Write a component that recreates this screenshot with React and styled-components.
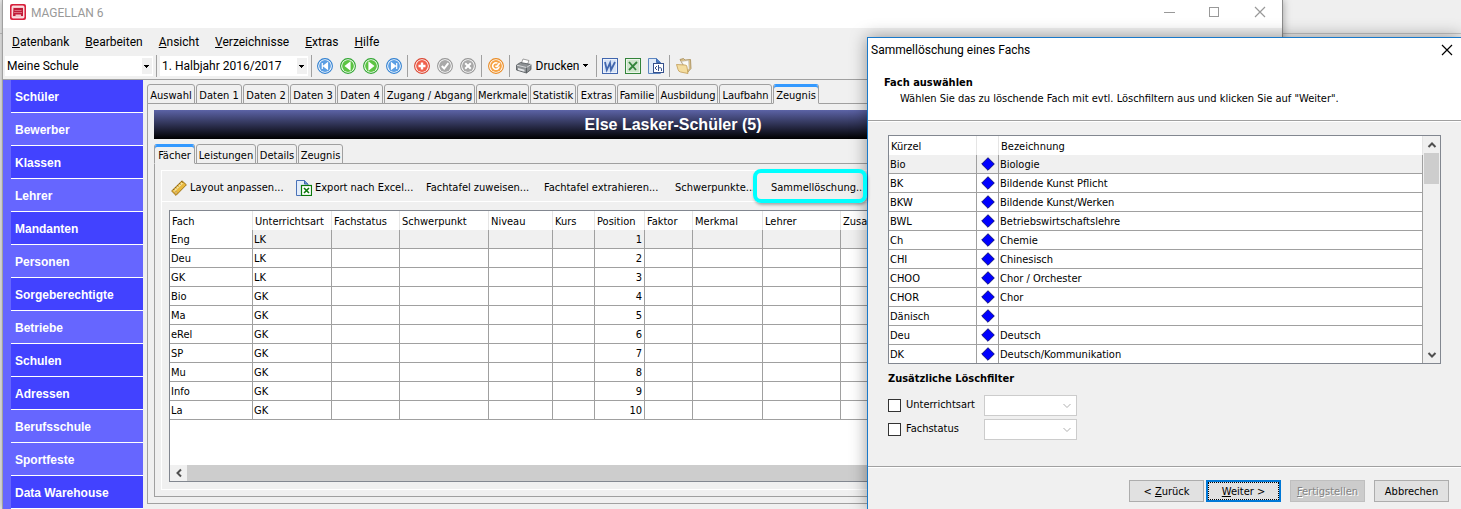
import React from "react";
import styled, { createGlobalStyle, css } from "styled-components";

const ui = `"DejaVu Sans Condensed", "DejaVu Sans", sans-serif`;
const shell = `Roboto, "Open Sans", sans-serif`;
const arial = `"Liberation Sans", Arial, sans-serif`;

const GlobalStyle = createGlobalStyle`
  *, *::before, *::after { box-sizing: border-box; }
  body { margin: 0; background: #efefef; color: #000; font: 11px/16px ${ui}; overflow: hidden; }
  button, select, input { font: inherit; color: inherit; margin: 0; }
`;

const Desktop = styled.div`
  position: relative;
  display: flex;
  min-height: 100vh;
  padding-left: 2px;
  background: linear-gradient(#efefef, #efefef 33px, #c6c6c6 33px, #c6c6c6 34px, #efefef 34px);
`;

const AppWindow = styled.section`
  flex: 1;
  min-width: 0;
  margin-right: 178px;
  display: flex;
  flex-direction: column;
  background: #f0f0f0;
  border-left: 1px solid #a0a0a0;
  border-right: 1px solid #8c8c8c;
  box-shadow: 0 0 8px rgba(0, 0, 0, 0.35);
`;

const TitleBar = styled.header`
  display: flex;
  align-items: center;
  height: 28px;
  padding: 0 0 4px 7px;
  background: #fff;
  color: #999;
  font: 12px/16px ${shell};
`;

const Title = styled.span`
  flex: 1;
  padding: 2px 0 0 5px;
`;

const CaptionButton = styled.button`
  display: grid;
  place-items: center;
  width: 45px;
  height: 24px;
  padding: 0;
  border: 0;
  background: none;
`;

const MenuBar = styled.nav`
  display: flex;
  align-items: center;
  gap: 16px;
  height: 26px;
  padding: 1px 0 0 9px;
  font: 12px/16px ${shell};
`;

const MenuItem = styled.button`
  padding: 0;
  border: 0;
  background: none;
`;

const ToolBar = styled.div`
  display: flex;
  align-items: center;
  height: 26px;
  padding: 0 0 2px 2px;
  border-bottom: 1px solid #a0a0a0;
  font: 12px/16px ${shell};
`;

const Separator = styled.span`
  width: 1px;
  height: 22px;
  margin: 0 ${(p) => p.$after ?? 6}px 0 ${(p) => p.$before ?? 6}px;
  background: #a0a0a0;
`;

const Combo = styled.span`
  display: grid;
  align-items: center;
  width: 148px;
  height: 20px;
  background: #fff;
  > * { grid-area: 1 / 1; }
  > svg { justify-self: end; margin-right: 1px; pointer-events: none; }
`;

const ComboSelect = styled.select`
  appearance: none;
  width: 100%;
  height: 20px;
  padding: 0 20px 0 2px;
  border: 0;
  background: none;
`;

const IconButton = styled.button`
  display: flex;
  align-items: center;
  justify-content: center;
  gap: 4px;
  min-width: 23px;
  height: 20px;
  padding: 0;
  border: 0;
  background: none;
`;

const PrintButton = styled(IconButton)`
  width: 74px;
`;

const Body = styled.div`
  flex: 1;
  display: flex;
  min-height: 0;
`;

const SideBar = styled.nav`
  display: flex;
  flex-direction: column;
  width: 140px;
  padding-left: 8px;
  background: #6666ff;
`;

const SideLink = styled.a`
  height: 33px;
  padding: 1px 0 0 4px;
  border-bottom: 1px solid #fff;
  background: ${(p) => (p.$dark ? "#4242ff" : "#6666ff")};
  color: #fff;
  font: bold 12px/33px ${arial};
  text-decoration: none;
`;

const Workspace = styled.main`
  flex: 1;
  min-width: 0;
  display: flex;
  flex-direction: column;
  padding: 4px 4px 5px;
`;

const Tabs = styled.div`
  display: flex;
  gap: 1px;
  position: relative;
  margin-bottom: -1px;
`;

const Tab = styled.button`
  width: ${(p) => p.$w}px;
  height: 20px;
  padding: 4px 0 0;
  border: 1px solid #a0a0a0;
  border-radius: 3px 3px 0 0;
  background: #f0f0f0;
  line-height: 14px;
  white-space: nowrap;
  ${(p) =>
    p.$active &&
    css`
      border-bottom-color: #f0f0f0;
      box-shadow: inset 0 2px #3399ff;
      border-top-color: #3399ff;
    `}
`;

const TabPage = styled.div`
  flex: 1;
  min-width: 0;
  display: flex;
  flex-direction: column;
  padding: 6px;
  border: 1px solid #a0a0a0;
`;

const NameBanner = styled.h1`
  height: 29px;
  margin: 0 0 5px;
  padding-right: 79px;
  background: linear-gradient(#5c63a6, #000);
  color: #fff;
  font: bold 16px/29px ${arial};
  text-align: center;
`;

const Panel = styled.div`
  flex: 1;
  display: flex;
  flex-direction: column;
  border: 1px solid #fff;
`;

const ActionBar = styled.div`
  display: flex;
  align-items: center;
  height: 31px;
  padding: 3px 0 0 9px;
  border-bottom: 1px solid #fff;
`;

const Action = styled.button`
  position: relative;
  display: flex;
  align-items: center;
  gap: 3px;
  width: ${(p) => p.$w}px;
  height: 24px;
  padding: 0;
  border: 0;
  background: none;
  white-space: nowrap;
`;

const Highlight = styled.span`
  position: absolute;
  z-index: 3;
  inset: -7px -7px -3px -18px;
  border: 4px solid #00ffff;
  border-radius: 8px;
  box-shadow: 1px 2px 3px rgba(0, 0, 0, 0.3);
  pointer-events: none;
`;

const GridBox = styled.div`
  flex: 1;
  display: flex;
  flex-direction: column;
  justify-content: space-between;
  margin: 8px 7px 7px;
  border: 1px solid #828790;
  background: #fff;
`;

const DataTable = styled.table`
  width: 100%;
  table-layout: fixed;
  border-collapse: separate;
  border-spacing: 0;
`;

const HeadCell = styled.th`
  height: 19px;
  padding: 2px 0 0 2px;
  border-right: 1px solid #e5e5e5;
  font-weight: normal;
  line-height: 16px;
  text-align: left;
  white-space: nowrap;
  overflow: hidden;
`;

const Row = styled.tr`
  background: ${(p) => (p.$selected ? "#f0f0f0" : "#fff")};
`;

const Cell = styled.td`
  height: 19px;
  padding: 2px 2px 0 1px;
  border-right: 1px solid #a0a0a0;
  border-bottom: 1px solid #a0a0a0;
  background: ${(p) => (p.$plain ? "#fff" : "transparent")};
  line-height: 16px;
  text-align: ${(p) => p.$align || "left"};
  white-space: nowrap;
`;

const MarkCell = styled(Cell)`
  padding: 0;
  > svg { display: block; margin: 0 auto; }
`;

const HScroll = styled.div`
  display: flex;
  align-items: center;
  height: 16px;
  background: #f0f0f0;
`;

const HThumb = styled.span`
  flex: 1;
  height: 16px;
  margin-right: 17px;
  background: #cdcdcd;
`;

const ScrollButton = styled.button`
  display: grid;
  place-items: center;
  width: 17px;
  height: 17px;
  padding: 0;
  border: 0;
  background: none;
`;

const Dialog = styled.section`
  position: absolute;
  z-index: 2;
  top: 37px;
  right: 0;
  bottom: 0;
  width: 594px;
  display: flex;
  flex-direction: column;
  border: solid #1979ca;
  border-width: 1px 0 0 1px;
  background: #f0f0f0;
  box-shadow: 0 0 16px rgba(0, 0, 0, 0.4);
`;

const DialogHead = styled.header`
  height: 83px;
  background: #fff;
  border-bottom: 1px solid #a0a0a0;
`;

const DialogTitle = styled.div`
  display: flex;
  align-items: center;
  justify-content: space-between;
  height: 24px;
  padding-left: 3px;
  font: 12px/16px ${shell};
`;

const DialogClose = styled(CaptionButton)`
  width: 29px;
`;

const Heading = styled.h2`
  margin: 0;
  padding: ${(p) => p.$pad};
  font: bold 11px/16px ${ui};
`;

const Hint = styled.p`
  margin: 0;
  padding-left: 32px;
`;

const DialogBody = styled.div`
  flex: 1;
  padding: 13px 20px 0;
  border-top: 1px solid #fff;
`;

const PickList = styled.div`
  display: flex;
  height: 229px;
  overflow: hidden;
  border: 1px solid #828790;
  background: #fff;
`;

const VScroll = styled.div`
  display: flex;
  flex-direction: column;
  justify-content: space-between;
  width: 17px;
  background: #f0f0f0;
`;

const VThumb = styled.span`
  width: 15px;
  height: 31px;
  margin: 0 1px auto;
  background: #cdcdcd;
`;

const Filter = styled.div`
  display: flex;
  align-items: center;
  height: 24px;
`;

const CheckLabel = styled.label`
  display: flex;
  align-items: center;
  gap: 5px;
  width: 96px;
`;

const CheckBox = styled.input`
  appearance: none;
  width: 13px;
  height: 13px;
  border: 1px solid #333;
  background: #fff;
`;

const FilterCombo = styled(Combo)`
  width: 93px;
  height: 21px;
  border: 1px solid #ccc;
  > svg { margin-right: 4px; }
`;

const DialogFoot = styled.footer`
  display: flex;
  height: 43px;
  padding: 13px 12px 0;
  justify-content: flex-end;
  border-top: 1px solid #a0a0a0;
  box-shadow: inset 0 1px #fff;
`;

const PushButton = styled.button`
  width: 75px;
  height: 22px;
  margin-left: ${(p) => p.$gap}px;
  padding: 2px 0 0;
  border: 1px solid #adadad;
  background: #e1e1e1;
  line-height: 16px;
  ${(p) =>
    p.$default &&
    css`
      border: 2px solid #0078d7;
      outline: 1px dotted #000;
      outline-offset: -3px;
    `}
  &:disabled {
    border-color: #bfbfbf;
    background: #ccc;
    color: #838383;
    text-shadow: 1px 1px #fff;
  }
`;

const Caret = () => (
  <svg width="10" height="16" viewBox="0 0 10 16">
    <rect width="10" height="16" fill="#f0f0f0" />
    <path d="M2 7h5v1H6v1H5v1H4V9H3V8H2z" fill="#000" />
  </svg>
);

const Chevron = ({ dir = "down", color = "#505050", thick = 2 }) => {
  const d = {
    down: "M1.500 3L5 6.500L8.500 3",
    up: "M1.500 7L5 3.500L8.500 7",
    left: "M7 1.500L3.500 5L7 8.500",
  }[dir];
  return (
    <svg width="10" height="10" viewBox="0 0 10 10">
      <path d={d} fill="none" stroke={color} strokeWidth={thick} />
    </svg>
  );
};

const CloseGlyph = ({ color }) => (
  <svg width="12" height="12" viewBox="0 0 12 12">
    <path d="M1 1l10 10M11 1L1 11" stroke={color} strokeWidth="1.200" />
  </svg>
);

const Logo = () => (
  <svg width="16" height="16" viewBox="0 0 16 16">
    <rect width="16" height="16" rx="2" fill="#d8203c" />
    <rect x="2" y="2" width="12" height="12" rx="1" fill="#f6c9cd" stroke="#fff" strokeWidth=".8" />
    <path d="M3.500 4h9.500v8h-2v-1.500H5.500V12H3z" fill="#c01c38" />
    <path d="M4.500 6.500h7M4 8.500h8" stroke="#e8909c" strokeWidth=".7" />
  </svg>
);

const glyphs = {
  first: <path d="M5.300 5v6M10.500 5v6L6.500 8z" />,
  prev: <path d="M10 4.500v7L5.500 8z" />,
  next: <path d="M6 4.500v7L10.500 8z" />,
  last: <path d="M5.500 5v6L9.500 8zM10.700 5v6" />,
  add: <path d="M8 4.500v7M4.500 8h7" strokeWidth="2.400" />,
  ok: <path d="M4.800 8l2.400 2.500L11.300 5.200" fill="none" strokeWidth="2" />,
  cancel: <path d="M5.200 5.200l5.600 5.600M10.800 5.200l-5.600 5.600" strokeWidth="2" />,
  refresh: <path d="M11.200 8.500A3.300 3.300 0 1 1 9.500 5.100M7.300 8l1.700.5L11.600 5" fill="none" strokeWidth="1.600" />,
};

const palette = {
  blue: ["#2f7fd0", "#5c9fe4"],
  green: ["#2fa52f", "#5cc443"],
  red: ["#d9432f", "#f0604c"],
  gray: ["#969696", "#a9a9a9"],
  orange: ["#e98a22", "#f7a343"],
};

const Round = ({ tone, glyph }) => (
  <svg width="16" height="16" viewBox="0 0 16 16">
    <circle cx="8" cy="8" r="7.400" fill="#fff" stroke={palette[tone][0]} strokeWidth="1.100" />
    <circle cx="8" cy="8" r="5.900" fill={palette[tone][1]} />
    <g fill="#fff" stroke="#fff" strokeWidth="1.200">{glyphs[glyph]}</g>
  </svg>
);

const Printer = () => (
  <svg width="16" height="16" viewBox="0 0 16 16">
    <path d="M5 6l2-5 6 1.500-2 5z" fill="#fff" stroke="#888" strokeWidth=".8" />
    <path d="M0.500 7l4-2.500L15 6.500v5l-4.500 3.500L.5 12z" fill="#8d9194" stroke="#4f5458" strokeWidth=".8" />
    <path d="M.8 7.200L10.500 9.500 15 6.500" fill="none" stroke="#d8dadc" />
    <path d="M10.500 9.500V15" stroke="#4f5458" strokeWidth=".8" />
    <path d="M2 10l6.500 1.700v2L2 12z" fill="#e4e6e8" />
  </svg>
);

const OfficeTile = ({ tone, bg, children }) => (
  <svg width="16" height="16" viewBox="0 0 16 16">
    <rect x=".5" y=".5" width="15" height="15" fill={bg} stroke={tone} />
    <rect x="1.500" y="1.500" width="13" height="13" fill="none" stroke="#fff" strokeOpacity=".6" />
    <g fill="none" stroke={tone} strokeWidth="1.800">{children}</g>
  </svg>
);

const HtmlDoc = () => (
  <svg width="16" height="16" viewBox="0 0 16 16">
    <path d="M.5.500h8l4 4v11H.5z" fill="#dfeaf8" stroke="#5d86c0" />
    <path d="M8.500.5v4h4" fill="#4d7cc4" stroke="#3f6bb0" />
    <rect x="5.500" y="5.500" width="10" height="9" fill="#fff" stroke="#35508c" />
    <path d="M9 8l-2 2 2 2M10.500 7v6M10.500 10.500c.5-1.200 3-1.200 3 .3V13" fill="none" stroke="#35508c" />
  </svg>
);

const Folder = () => (
  <svg width="16" height="16" viewBox="0 0 16 16">
    <path d="M4 1.500l3.500-1 1.500 1.500 5.500-.5.500 9-3.500 4z" fill="#d9c08a" stroke="#a58a55" strokeWidth=".8" />
    <path d="M5.500 3.500l7-1 .5 8-2 2z" fill="#fbfbf8" stroke="#bbb" strokeWidth=".5" />
    <path d="M.5 6.500l8.500.5q2 0 2 2l1 6.500L4.500 14Q2.500 13.500 2 11.500z" fill="#f4dda0" stroke="#c09c55" strokeWidth=".8" />
  </svg>
);

const Ruler = () => (
  <svg width="16" height="16" viewBox="0 0 16 16">
    <path d="M.6 11L11 .8l4.400 4L5 15.400z" fill="#e9b93e" stroke="#96690f" strokeWidth=".9" />
    <path d="M3 11.300L11.400 3" stroke="#f9e6a0" strokeWidth="1.500" />
    <path d="M2.500 9.200l1 1M4.500 7.300l1 1M6.500 5.400l1 1M8.500 3.400l1 1M10.500 1.500l1 1" stroke="#5f4208" strokeWidth=".9" />
    <circle cx="5" cy="12.500" r=".9" fill="#fff7dc" stroke="#96690f" strokeWidth=".5" />
  </svg>
);

const ExcelDoc = () => (
  <svg width="16" height="16" viewBox="0 0 16 16">
    <path d="M.5.500h8l3.500 3.500v11.500H.5z" fill="#e3edfa" stroke="#4a72b8" />
    <path d="M8.500.5V4H12" fill="#6f96d4" stroke="#3f66ac" />
    <rect x="5.500" y="5.500" width="10" height="10" fill="#fff" stroke="#0b780b" strokeWidth="1.200" />
    <path d="M8 8l5 5M13 8l-5 5" stroke="#0b780b" strokeWidth="1.600" />
  </svg>
);

const Diamond = () => (
  <svg width="14" height="14" viewBox="0 0 14 14">
    <path d="M7 .7L13.300 7 7 13.300.7 7z" fill="#0000ff" stroke="#000060" strokeWidth=".8" />
  </svg>
);

const menus = ["Datenbank", "Bearbeiten", "Ansicht", "Verzeichnisse", "Extras", "Hilfe"];

const sections = [
  ["Schüler", true], ["Bewerber", false], ["Klassen", true], ["Lehrer", false],
  ["Mandanten", true], ["Personen", false], ["Sorgeberechtigte", true], ["Betriebe", false],
  ["Schulen", true], ["Adressen", true], ["Berufsschule", false], ["Sportfeste", false],
  ["Data Warehouse", true],
];

const mainTabs = [
  ["Auswahl", 48], ["Daten 1", 46], ["Daten 2", 46], ["Daten 3", 46], ["Daten 4", 46],
  ["Zugang / Abgang", 91], ["Merkmale", 53], ["Statistik", 46], ["Extras", 39],
  ["Familie", 40], ["Ausbildung", 60], ["Laufbahn", 53], ["Zeugnis", 46],
];

const subTabs = [["Fächer", 41], ["Leistungen", 60], ["Details", 40], ["Zeugnis", 45]];

const columns = [
  ["Fach", 83], ["Unterrichtsart", 79], ["Fachstatus", 68], ["Schwerpunkt", 89], ["Niveau", 64],
  ["Kurs", 42], ["Position", 50], ["Faktor", 48], ["Merkmal", 70], ["Lehrer", 78], ["Zusatz", null],
];

const subjects = [
  ["Eng", "LK"], ["Deu", "LK"], ["GK", "LK"], ["Bio", "GK"], ["Ma", "GK"],
  ["eRel", "GK"], ["SP", "GK"], ["Mu", "GK"], ["Info", "GK"], ["La", "GK"],
];

const catalog = [
  ["Bio", "Biologie"], ["BK", "Bildende Kunst Pflicht"], ["BKW", "Bildende Kunst/Werken"],
  ["BWL", "Betriebswirtschaftslehre"], ["Ch", "Chemie"], ["CHI", "Chinesisch"],
  ["CHOO", "Chor / Orchester"], ["CHOR", "Chor"], ["Dänisch", ""], ["Deu", "Deutsch"],
  ["DK", "Deutsch/Kommunikation"],
];

const TabStrip = ({ items, active }) => (
  <Tabs role="tablist">
    {items.map(([name, w], i) => (
      <Tab key={name} role="tab" $w={w} $active={i === active} aria-selected={i === active}>
        {name}
      </Tab>
    ))}
  </Tabs>
);

function MainWindow() {
  return (
    <AppWindow>
      <TitleBar>
        <Logo />
        <Title>MAGELLAN 6</Title>
        <CaptionButton aria-label="Minimieren">
          <svg width="11" height="11"><path d="M0 5.500h11" stroke="#999" /></svg>
        </CaptionButton>
        <CaptionButton aria-label="Maximieren">
          <svg width="11" height="11"><rect x=".5" y=".5" width="9" height="9" fill="none" stroke="#999" /></svg>
        </CaptionButton>
        <CaptionButton aria-label="Schließen"><CloseGlyph color="#999" /></CaptionButton>
      </TitleBar>
      <MenuBar>
        {menus.map((m) => (
          <MenuItem key={m}><u>{m[0]}</u>{m.slice(1)}</MenuItem>
        ))}
      </MenuBar>
      <ToolBar>
        <Combo>
          <ComboSelect aria-label="Schule"><option>Meine Schule</option></ComboSelect>
          <Caret />
        </Combo>
        <Separator $before={3} $after={3} />
        <Combo>
          <ComboSelect aria-label="Zeitraum"><option>1. Halbjahr 2016/2017</option></ComboSelect>
          <Caret />
        </Combo>
        <Separator $before={3} $after={1} />
        <IconButton aria-label="Erster"><Round tone="blue" glyph="first" /></IconButton>
        <IconButton aria-label="Vorheriger"><Round tone="green" glyph="prev" /></IconButton>
        <IconButton aria-label="Nächster"><Round tone="green" glyph="next" /></IconButton>
        <IconButton aria-label="Letzter"><Round tone="blue" glyph="last" /></IconButton>
        <Separator $before={2} $after={2} />
        <IconButton aria-label="Neu"><Round tone="red" glyph="add" /></IconButton>
        <IconButton aria-label="Speichern"><Round tone="gray" glyph="ok" /></IconButton>
        <IconButton aria-label="Abbrechen"><Round tone="gray" glyph="cancel" /></IconButton>
        <Separator $before={2} $after={2} />
        <IconButton aria-label="Aktualisieren"><Round tone="orange" glyph="refresh" /></IconButton>
        <Separator $before={2} $after={5} />
        <PrintButton>
          <Printer />
          Drucken
          <svg width="5" height="3"><path d="M0 0h5v1H4v1H3v1H2V2H1V1H0z" /></svg>
        </PrintButton>
        <Separator $before={7} $after={1} />
        <IconButton aria-label="Word">
          <OfficeTile tone="#4166ae" bg="#d5e2f6"><path d="M3 4l1.800 8L8 5l1 7 4-8" /></OfficeTile>
        </IconButton>
        <IconButton aria-label="Excel">
          <OfficeTile tone="#33843a" bg="#cfe5cc"><path d="M4 4l7 8M12 4l-8 8" /></OfficeTile>
        </IconButton>
        <IconButton aria-label="HTML"><HtmlDoc /></IconButton>
        <Separator $before={2} $after={2} />
        <IconButton aria-label="Öffnen"><Folder /></IconButton>
      </ToolBar>
      <Body>
        <SideBar>
          {sections.map(([name, dark]) => (
            <SideLink key={name} href="#" $dark={dark}>{name}</SideLink>
          ))}
        </SideBar>
        <Workspace>
          <TabStrip items={mainTabs} active={12} />
          <TabPage>
            <NameBanner>Else Lasker-Schüler (5)</NameBanner>
            <TabStrip items={subTabs} active={0} />
            <TabPage>
              <Panel>
                <ActionBar>
                  <Action $w={125}><Ruler />Layout anpassen...</Action>
                  <Action $w={130}><ExcelDoc />Export nach Excel...</Action>
                  <Action $w={118}>Fachtafel zuweisen...</Action>
                  <Action $w={131}>Fachtafel extrahieren...</Action>
                  <Action $w={96}>Schwerpunkte...</Action>
                  <Action $w={89}>Sammellöschung...<Highlight /></Action>
                </ActionBar>
                <GridBox>
                  <DataTable>
                    <colgroup>
                      {columns.map(([name, w]) => <col key={name} width={w ?? undefined} />)}
                    </colgroup>
                    <thead>
                      <tr>{columns.map(([name]) => <HeadCell key={name}>{name}</HeadCell>)}</tr>
                    </thead>
                    <tbody>
                      {subjects.map(([fach, art], i) => (
                        <Row key={fach} $selected={i === 0}>
                          <Cell $plain>{fach}</Cell>
                          <Cell>{art}</Cell>
                          <Cell /><Cell /><Cell /><Cell />
                          <Cell $align="right">{i + 1}</Cell>
                          <Cell /><Cell /><Cell /><Cell />
                        </Row>
                      ))}
                    </tbody>
                  </DataTable>
                  <HScroll>
                    <ScrollButton aria-label="Nach links"><Chevron dir="left" /></ScrollButton>
                    <HThumb />
                  </HScroll>
                </GridBox>
              </Panel>
            </TabPage>
          </TabPage>
        </Workspace>
      </Body>
    </AppWindow>
  );
}

function FilterRow({ id, label }) {
  return (
    <Filter>
      <CheckLabel><CheckBox type="checkbox" id={id} />{label}</CheckLabel>
      <FilterCombo>
        <ComboSelect aria-label={label} disabled><option /></ComboSelect>
        <Chevron color="#b0b0b0" thick={1} />
      </FilterCombo>
    </Filter>
  );
}

function DeleteWizard() {
  return (
    <Dialog role="dialog" aria-label="Sammellöschung eines Fachs">
      <DialogHead>
        <DialogTitle>
          Sammellöschung eines Fachs
          <DialogClose aria-label="Schließen"><CloseGlyph color="#000" /></DialogClose>
        </DialogTitle>
        <Heading $pad="13px 0 0 16px">Fach auswählen</Heading>
        <Hint>Wählen Sie das zu löschende Fach mit evtl. Löschfiltern aus und klicken Sie auf "Weiter".</Hint>
      </DialogHead>
      <DialogBody>
        <PickList>
          <DataTable>
            <colgroup><col width="88" /><col width="22" /><col /></colgroup>
            <thead>
              <tr><HeadCell>Kürzel</HeadCell><HeadCell /><HeadCell>Bezeichnung</HeadCell></tr>
            </thead>
            <tbody>
              {catalog.map(([key, name], i) => (
                <Row key={key} $selected={i === 0}>
                  <Cell>{key}</Cell>
                  <MarkCell><Diamond /></MarkCell>
                  <Cell>{name}</Cell>
                </Row>
              ))}
            </tbody>
          </DataTable>
          <VScroll>
            <ScrollButton aria-label="Nach oben"><Chevron dir="up" /></ScrollButton>
            <VThumb />
            <ScrollButton aria-label="Nach unten"><Chevron /></ScrollButton>
          </VScroll>
        </PickList>
        <Heading $pad="7px 0 6px">Zusätzliche Löschfilter</Heading>
        <FilterRow id="filter-art" label="Unterrichtsart" />
        <FilterRow id="filter-status" label="Fachstatus" />
      </DialogBody>
      <DialogFoot>
        <PushButton>&lt; <u>Z</u>urück</PushButton>
        <PushButton $gap={2} $default><u>W</u>eiter &gt;</PushButton>
        <PushButton $gap={9} disabled><u>F</u>ertigstellen</PushButton>
        <PushButton $gap={9}>Abbrechen</PushButton>
      </DialogFoot>
    </Dialog>
  );
}

export default function App() {
  return (
    <>
      <GlobalStyle />
      <Desktop>
        <MainWindow />
        <DeleteWizard />
      </Desktop>
    </>
  );
}
